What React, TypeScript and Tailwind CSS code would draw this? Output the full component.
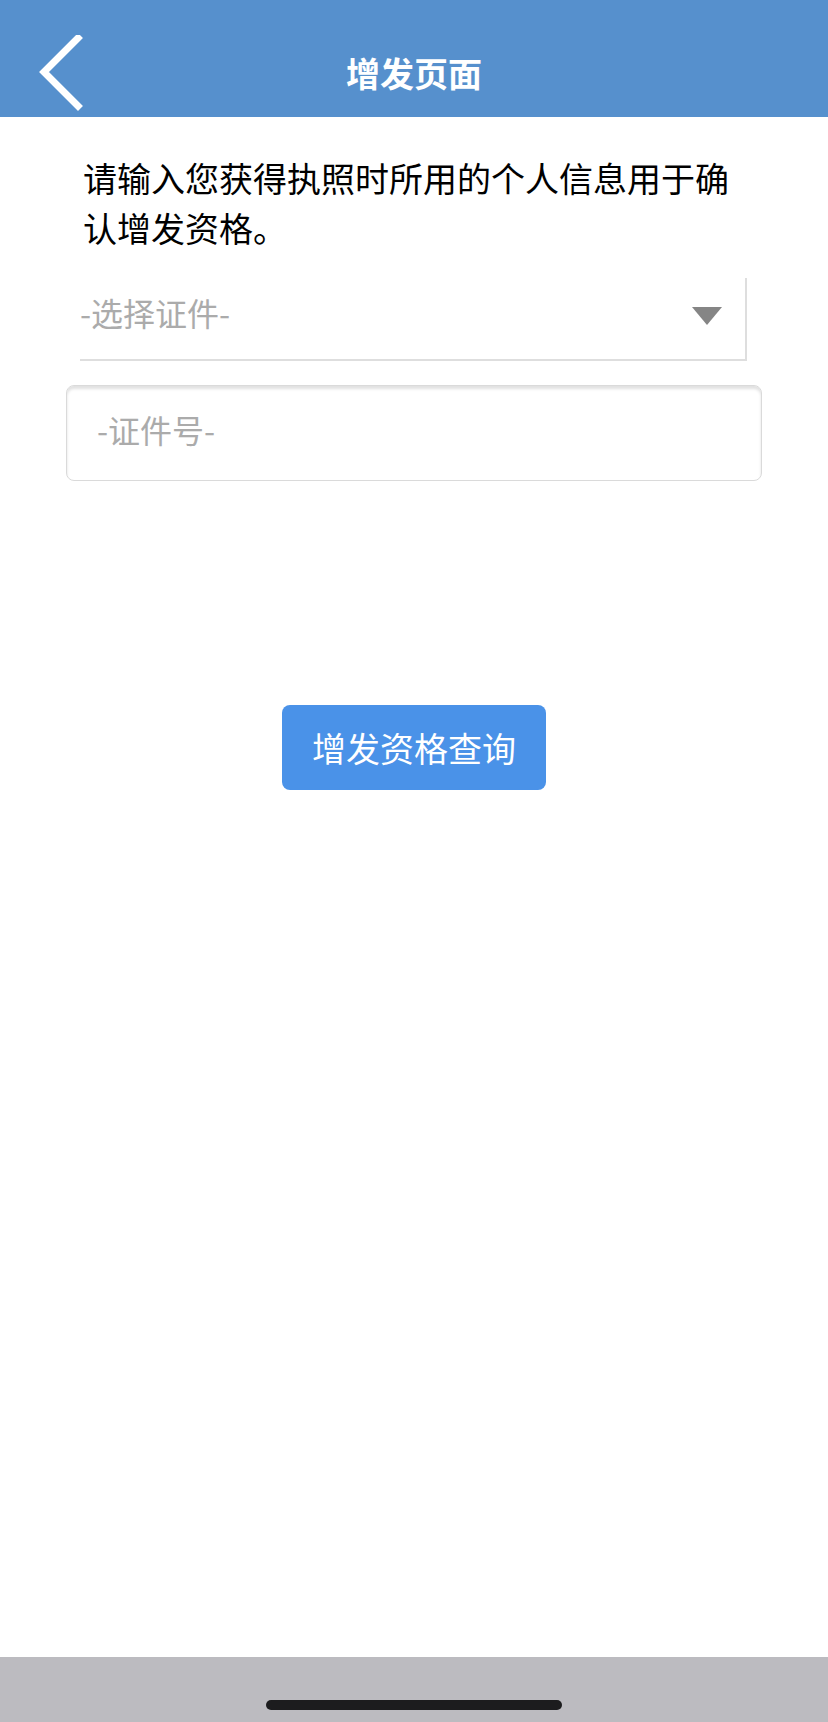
import React from 'react';

const cjk = "font-['Noto_Sans_CJK_SC','Noto_Sans',sans-serif]";

const BackIcon: React.FC = () => (
  <svg width="48" height="76" viewBox="0 0 48 76" fill="none">
    <path d="M40 3 L6 37 L40 71" stroke="white" strokeWidth="7" strokeLinecap="square" strokeLinejoin="miter" />
  </svg>
);

export default function App() {
  return (
    <div className={`min-h-screen w-full bg-white flex flex-col ${cjk}`}>
      <header className="h-[117px] bg-[#5690cd] grid grid-cols-[1fr_auto_1fr] items-center pt-[28px]">
        <button className="pl-[38px] flex items-center">
          <BackIcon />
        </button>
        <h1 className="text-white text-[34px] font-bold leading-none">增发页面</h1>
        <div />
      </header>

      <main className="flex flex-col">
        <p className="mt-[36px] ml-[83px] w-[664px] text-[34px] leading-[50px] text-black">
          请输入您获得执照时所用的个人信息用于确认增发资格。
        </p>

        <div className="mt-[25px] ml-[80px] w-[667px] h-[83px] flex items-center justify-between border-r-2 border-b-2 border-[#dedede] pb-[14px]">
          <span className="text-[32px] text-[#ababab] leading-none">-选择证件-</span>
          <svg width="30" height="18" viewBox="0 0 30 18" className="mr-[23px] mt-[8px]">
            <path d="M0 0 H30 L15 18 Z" fill="#858585" />
          </svg>
        </div>

        <div className="mt-[24px] ml-[66px] w-[696px] h-[96px] flex items-center border border-[#dadada] rounded-[8px] shadow-[inset_0_3px_3px_rgba(0,0,0,0.12)] pl-[30px] pb-[8px]">
          <span className="text-[32px] text-[#ababab] leading-none">-证件号-</span>
        </div>

        <div className="mt-[224px] flex justify-center">
          <button className="w-[264px] h-[85px] bg-[#4a92e8] rounded-[8px] text-white text-[34px] leading-none">
            增发资格查询
          </button>
        </div>
      </main>

      <footer className="mt-auto h-[65px] bg-[#bcbbc0] flex items-end justify-center pb-[12px]">
        <div className="w-[296px] h-[10px] rounded-full bg-[#1c1c1e]" />
      </footer>
    </div>
  );
}
